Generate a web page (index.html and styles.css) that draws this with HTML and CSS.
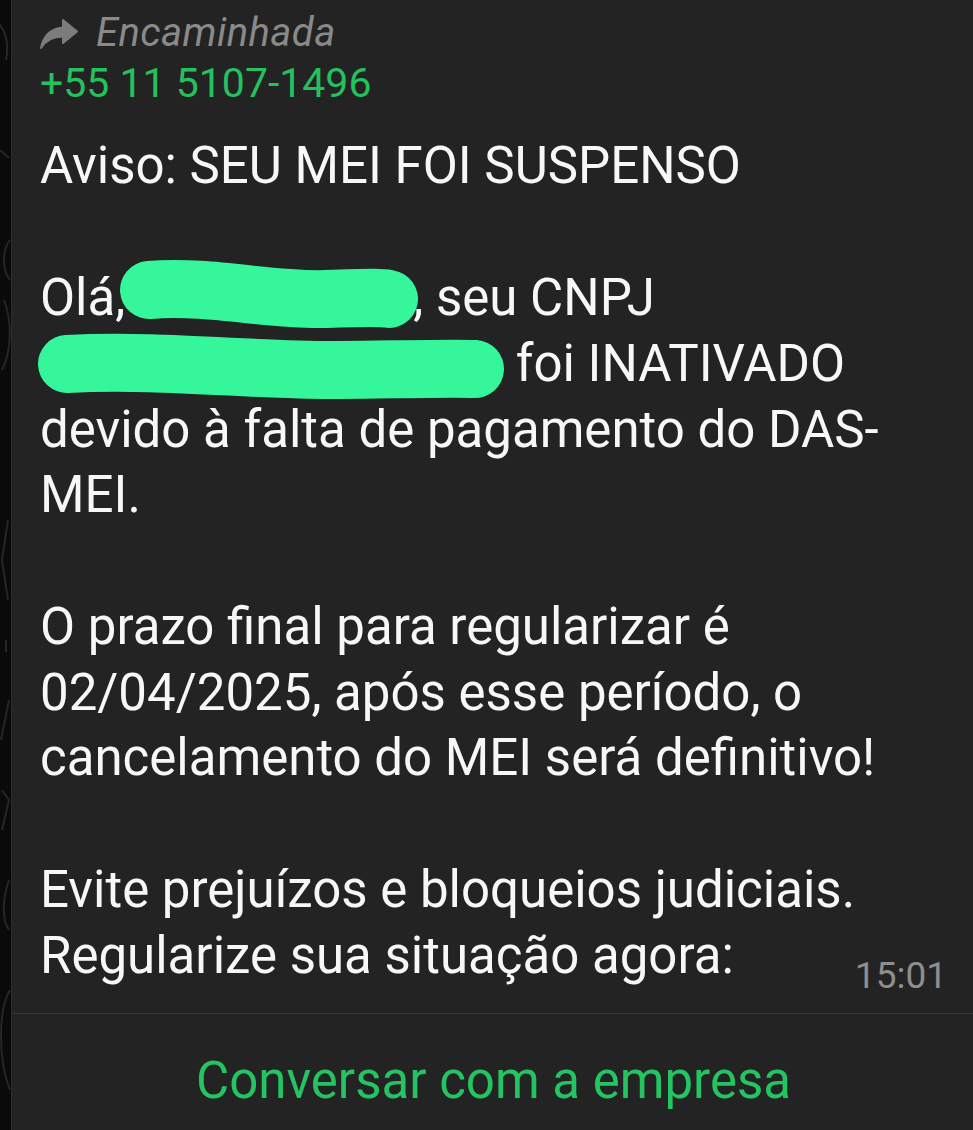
FILE: index.html
```html
<!DOCTYPE html>
<html lang="pt-BR">
<head>
	<meta charset="UTF-8">
	<meta name="viewport" content="width=device-width, initial-scale=1">
	<title>Mensagem encaminhada</title>
	<link rel="stylesheet" href="styles.css">
</head>
<body>

	<div class="chat">
		<div class="wallpaper">
			<svg width="11" height="1130" viewBox="0 0 11 1130" fill="none" stroke="#262626" stroke-width="2">
				<path d="M-4 20 C4 28 10 40 6 60"/>
				<path d="M0 150 L9 158"/>
				<path d="M10 240 C2 250 2 270 10 280"/>
				<path d="M4 300 C12 320 12 350 2 370"/>
				<path d="M8 520 L2 560 L8 600"/>
				<path d="M6 640 L6 652"/>
				<path d="M9 700 L1 740"/>
				<path d="M2 790 L9 800 L2 830"/>
				<path d="M9 880 C2 900 2 920 9 930"/>
				<path d="M10 990 C-2 1010 -2 1060 10 1090"/>
			</svg>
		</div>

		<div class="bubble">
			<div class="forwarded">
				<svg class="fwd-icon" width="38" height="30" viewBox="0 0 38 30">
					<path d="M23 1 L37 12.5 L23 24 V17.5 C13 17.5 6 20.5 1 29 C3 18 10 9.5 23 8.5 Z" fill="#7c7c7c" stroke="#7c7c7c" stroke-width="2" stroke-linejoin="round"/>
				</svg>
				<span>Encaminhada</span>
			</div>
			<div class="sender">+55 11 5107-1496</div>

			<div class="content">
				<div class="text">Aviso: SEU MEI FOI SUSPENSO<br>
					<br>
					Olá,<span class="mark mark-name"><svg width="295" height="66" viewBox="0 0 295 66"><path d="M28 25 C90 20 150 36 205 34 S262 33 268 34" /></svg></span>, seu CNPJ<br>
					<span class="mark mark-cnpj"><svg width="464" height="66" viewBox="0 0 464 66"><path d="M28 33 C120 28 220 40 300 39 S420 37 436 38" /></svg></span> foi INATIVADO<br>
					devido à falta de pagamento do DAS-<br>
					MEI.<br>
					<br>
					O prazo final para regularizar é<br>
					02/04/2025, após esse período, o<br>
					cancelamento do MEI será definitivo!<br>
					<br>
					Evite prejuízos e bloqueios judiciais.<br>
					Regularize sua situação agora:</div>
				<div class="time">15:01</div>
			</div>

			<div class="divider"></div>

			<div class="action">Conversar com a empresa</div>
		</div>
	</div>

</body>
</html>
```

FILE: styles.css
```css
body {
	margin: 0;
	padding: 0;
	background: #0a0a0a;
	font-family: Roboto, 'Liberation Sans', sans-serif;
	height: 1130px;
	overflow: hidden;
}
.chat {
	display: flex;
	height: 1130px;
}
.wallpaper {
	width: 11px;
	flex-shrink: 0;
}
.wallpaper svg {
	display: block;
}
.bubble {
	flex: 1;
	background: #232323;
	border-left: 1px solid #2c2c2c;
	padding: 8px 26px 0 28px;
	overflow: hidden;
}
.forwarded {
	display: flex;
	align-items: center;
	gap: 18px;
	height: 50px;
	color: #8a8a8a;
	font-style: italic;
	font-size: 40px;
	line-height: 50px;
	letter-spacing: 0.4px;
}
.fwd-icon {
	margin-top: 2px;
}
.sender {
	color: #24c15f;
	font-size: 41px;
	line-height: 50px;
}
.content {
	display: grid;
	margin-top: 25px;
}
.text {
	grid-area: 1 / 1;
	color: #f7f7f7;
	font-size: 51px;
	line-height: 65.75px;
	white-space: nowrap;
}
.time {
	grid-area: 1 / 1;
	justify-self: end;
	align-self: end;
	color: #8e8e8e;
	font-size: 37px;
	line-height: 26px;
	margin-bottom: -1px;
}
.mark {
	display: inline-block;
	vertical-align: top;
	height: 66px;
}
.mark svg {
	display: block;
	overflow: visible;
}
.mark path {
	fill: none;
	stroke: #35f69a;
	stroke-width: 58;
	stroke-linecap: round;
}
.mark-name {
	width: 295px;
	margin: 0 -3px 0 -4px;
}
.mark-cnpj {
	width: 464px;
	margin-left: -1px;
}
.divider {
	height: 1px;
	background: #383838;
	margin: 25px -26px 0 -28px;
}
.action {
	padding-top: 34px;
	text-align: center;
	color: #25c462;
	font-size: 51px;
	line-height: 66px;
}
```
